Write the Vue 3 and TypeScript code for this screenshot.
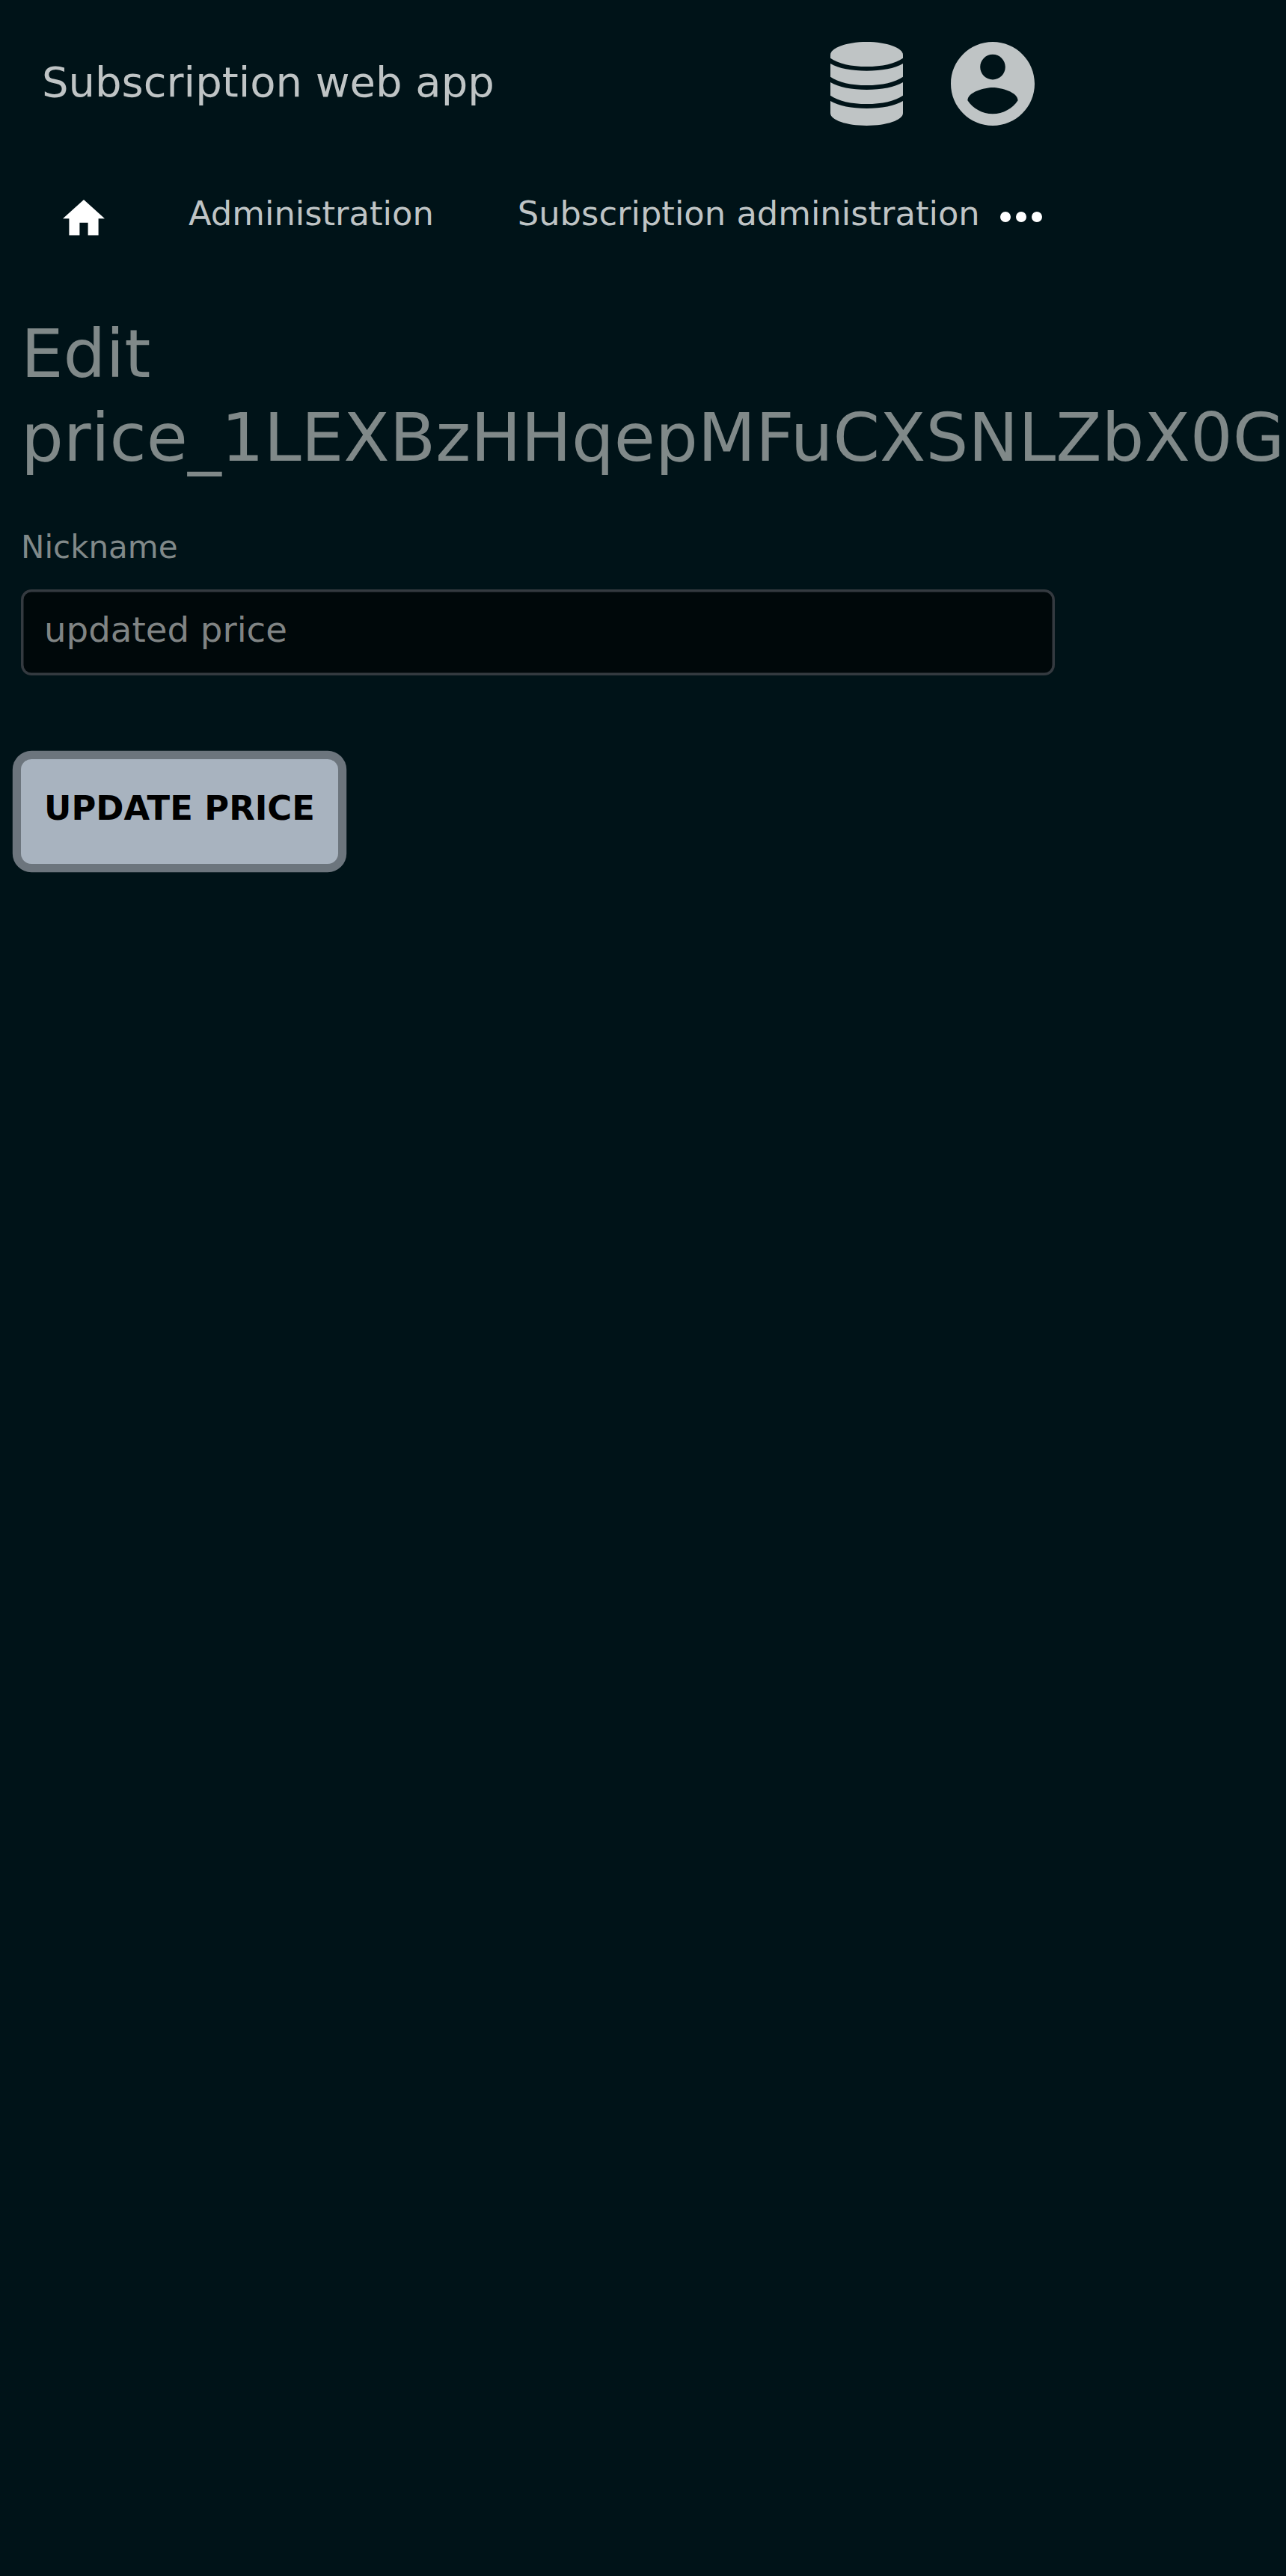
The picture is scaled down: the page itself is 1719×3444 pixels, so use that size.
<script setup lang="ts">
import { ref } from 'vue'

const nickname = ref('updated price')
const priceId = 'price_1LEXBzHHqepMFuCXSNLZbX0G'
const links = ['Administration', 'Subscription administration']
</script>

<template>
  <div class="page">
    <header class="header">
      <span class="title">Subscription web app</span>
      <svg class="database" viewBox="0 0 290 336" preserveAspectRatio="none">
        <path d="M0 52C0 24 65 0 145 0s145 24 145 52v13c-30 22-84 34-145 34S30 87 0 65z" />
        <path d="M0 87c32 20 86 29 145 29s113-9 145-29v53c-30 22-84 34-145 34S30 162 0 140z" />
        <path d="M0 162c32 20 86 30 145 30s113-10 145-30v53c-30 22-84 34-145 34S30 237 0 215z" />
        <path d="M0 237c32 20 86 30 145 30s113-10 145-30v49c0 28-65 50-145 50S0 314 0 286z" />
      </svg>
      <svg class="account" viewBox="2 2 20 20">
        <path d="M12 2C6.48 2 2 6.48 2 12s4.48 10 10 10 10-4.48 10-10S17.52 2 12 2zm0 3c1.66 0 3 1.34 3 3s-1.34 3-3 3-3-1.34-3-3 1.34-3 3-3zm0 14.2c-2.5 0-4.71-1.28-6-3.22.03-1.99 4-3.08 6-3.08 1.99 0 5.97 1.09 6 3.08-1.29 1.94-3.5 3.22-6 3.22z" />
      </svg>
    </header>
    <nav class="nav">
      <svg class="home" viewBox="2 3 20 17"><path d="M10 20v-6h4v6h5v-8h3L12 3 2 12h3v8z" /></svg>
      <a v-for="link in links" :key="link" class="link">{{ link }}</a>
      <svg class="more" viewBox="0 0 24 24">
        <circle cx="6" cy="12" r="2" /><circle cx="12" cy="12" r="2" /><circle cx="18" cy="12" r="2" />
      </svg>
    </nav>
    <main class="content">
      <h1>Edit<br />{{ priceId }}</h1>
      <form @submit.prevent>
        <label for="nickname">Nickname</label>
        <input id="nickname" v-model="nickname" type="text" />
        <button type="submit">UPDATE PRICE</button>
      </form>
    </main>
  </div>
</template>

<style>
html,
body {
  background: #001318;
}
</style>

<style scoped>
.page {
  box-sizing: border-box;
  width: 1719px;
  height: 3444px;
  overflow: hidden;
  background: #001318;
  color: #808989;
  font-family: "DejaVu Sans", sans-serif;
  font-size: 44.8px;
}
.header {
  box-sizing: border-box;
  display: flex;
  align-items: center;
  width: 1438px;
  height: 224px;
  padding: 0 55px 0 56px;
  fill: #bfc4c5;
}
.title {
  margin-right: auto;
  padding-bottom: 4px;
  color: #bfc4c5;
  font-size: 56px;
  line-height: 84px;
}
.database {
  width: 97px;
  height: 112px;
  margin-right: 64px;
}
.account {
  width: 112px;
  height: 112px;
}
.nav {
  box-sizing: border-box;
  display: flex;
  align-items: flex-start;
  width: 1407px;
  height: 193px;
  padding-left: 84px;
  fill: #fff;
}
.home {
  flex: none;
  width: 56px;
  height: 47.6px;
  margin: 43px 112px 0 0;
}
.link {
  margin: 28px 112px 0 0;
  color: #bfc4c5;
  line-height: 67.2px;
  white-space: nowrap;
}
.link:last-of-type {
  margin-right: 0;
}
.more {
  flex: none;
  width: 84px;
  height: 84px;
  margin: 24px 0 0 auto;
}
.content {
  padding-left: 28px;
}
h1 {
  margin: 0;
  font-size: 89.6px;
  font-weight: 400;
  line-height: 112px;
  white-space: nowrap;
}
label {
  display: block;
  margin-top: 59px;
  font-size: 42px;
  line-height: 63px;
}
input {
  box-sizing: border-box;
  display: block;
  width: 1382px;
  height: 115px;
  margin-top: 25px;
  padding: 0 31px 7.5px;
  border: 0;
  border-radius: 14px;
  outline: none;
  background: #00080a;
  box-shadow: inset 0 0 0 3.5px #343a40;
  color: #808484;
  font: 46.667px "DejaVu Sans", sans-serif;
}
button {
  display: block;
  height: 140px;
  margin-top: 112px;
  padding: 0 31px 10px;
  border: 0;
  border-radius: 14px;
  background: #a8b3bf;
  box-shadow: 0 0 0 11.2px #6c757d;
  color: #000;
  font: 700 44.8px "DejaVu Sans", sans-serif;
}
</style>
